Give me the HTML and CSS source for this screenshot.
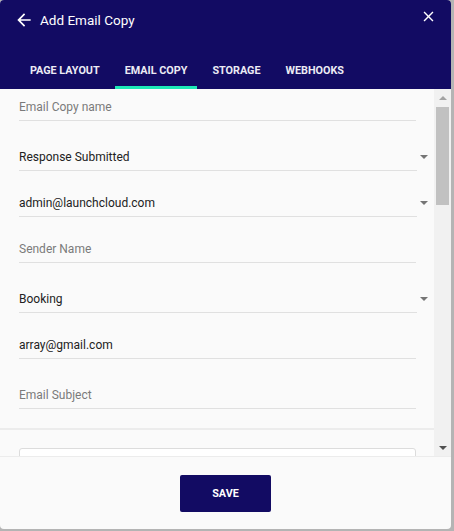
FILE: index.html
```html
<!DOCTYPE html>
<html>
<head>
<meta charset="utf-8">
<link rel="stylesheet" href="styles.css">
</head>
<body>
<div class="dialog">
  <div class="header">
    <div class="titlebar">
      <svg class="back" viewBox="0 0 24 24" width="20" height="20"><path fill="#fff" d="M20 11H7.830l5.590-5.590L12 4l-8 8 8 8 1.410-1.410L7.830 13H20v-2z"/></svg>
      <span class="title">Add Email Copy</span>
      <svg class="close" viewBox="0 0 24 24" width="17" height="17"><path fill="#fff" d="M19 6.41L17.59 5 12 10.59 6.41 5 5 6.41 10.59 12 5 17.59 6.41 19 12 13.41 17.59 19 19 17.59 13.41 12z"/></svg>
    </div>
    <div class="tabs">
      <div class="tab">PAGE LAYOUT</div>
      <div class="tab active">EMAIL COPY</div>
      <div class="tab">STORAGE</div>
      <div class="tab">WEBHOOKS</div>
    </div>
  </div>
  <div class="body">
    <div class="scroll-area">
      <div class="fields">
        <div class="field text"><div class="control placeholder">Email Copy name</div></div>
        <div class="field select"><div class="control">Response Submitted</div><span class="caret"></span></div>
        <div class="field select"><div class="control">admin@launchcloud.com</div><span class="caret"></span></div>
        <div class="field text"><div class="control placeholder">Sender Name</div></div>
        <div class="field select"><div class="control">Booking</div><span class="caret"></span></div>
        <div class="field text"><div class="control">array@gmail.com</div></div>
        <div class="field text last"><div class="control placeholder">Email Subject</div></div>
      </div>
      <div class="divider"></div>
      <div class="editor"></div>
    </div>
    <div class="scrollbar">
      <div class="sb-btn"><span class="sb-up"></span></div>
      <div class="sb-track"><div class="sb-thumb"></div></div>
      <div class="sb-btn"><span class="sb-down"></span></div>
    </div>
  </div>
  <div class="footer">
    <button class="save">SAVE</button>
  </div>
</div>
</body>
</html>
```
FILE: styles.css
```css
html, body {
  margin: 0;
  padding: 0;
}
body {
  background: #b4b4b4;
  font-family: Roboto, "Liberation Sans", sans-serif;
  width: 454px;
  height: 531px;
  overflow: hidden;
}
.dialog {
  width: 451px;
  height: 529px;
  border-radius: 4px;
  overflow: hidden;
  background: #fafafa;
  display: flex;
  flex-direction: column;
}
.header {
  background: #120b63;
  height: 89px;
  display: flex;
  flex-direction: column;
  flex-shrink: 0;
}
.titlebar {
  height: 40px;
  display: flex;
  align-items: center;
  padding-left: 14px;
}
.back {
  display: block;
  flex-shrink: 0;
}
.title {
  margin-left: 6px;
  color: #fff;
  font-size: 13.5px;
}
.close {
  display: block;
  align-self: flex-start;
  margin-top: 8px;
  margin-left: auto;
  margin-right: 14px;
}
.tabs {
  margin-top: auto;
  display: flex;
  padding-left: 20px;
  gap: 5px;
}
.tab {
  height: 31px;
  box-sizing: border-box;
  padding: 0 10px 4px;
  border-bottom: 3px solid transparent;
  display: flex;
  align-items: center;
  color: #ecebf4;
  font-size: 10.8px;
  font-weight: 700;
}
.tab.active {
  border-bottom-color: #1de9b6;
}
.body {
  height: 367px;
  display: flex;
  flex-shrink: 0;
}
.scroll-area {
  flex: 1;
  overflow: hidden;
}
.fields {
  padding: 3px 6px 0 19px;
}
.field {
  display: flex;
  align-items: center;
}
.field.text {
  margin-bottom: 21px;
  padding-right: 12px;
}
.field.select {
  margin-bottom: 17px;
}
.field.last {
  margin-bottom: 19px;
}
.control {
  flex: 1;
  height: 27px;
  padding-top: 1px;
  border-bottom: 1px solid #e0e0e0;
  display: flex;
  align-items: center;
  font-size: 12px;
  color: #222;
}
.control.placeholder {
  color: #7a7a7a;
}
.caret {
  width: 0;
  height: 0;
  border-left: 4.5px solid transparent;
  border-right: 4.5px solid transparent;
  border-top: 4.5px solid #757575;
  margin-left: 3px;
}
.divider {
  height: 2px;
  background: #ececec;
}
.editor {
  margin: 18px 18px 0 19px;
  height: 40px;
  background: #fff;
  border: 1px solid #dcdcdc;
  border-radius: 3px;
}
.scrollbar {
  width: 17px;
  background: #f1f1f1;
  display: flex;
  flex-direction: column;
}
.sb-btn {
  height: 17px;
  display: flex;
  align-items: center;
  justify-content: center;
}
.sb-up {
  width: 0;
  height: 0;
  border-left: 4px solid transparent;
  border-right: 4px solid transparent;
  border-bottom: 4px solid #a3a3a3;
}
.sb-down {
  width: 0;
  height: 0;
  border-left: 4px solid transparent;
  border-right: 4px solid transparent;
  border-top: 4px solid #505050;
}
.sb-track {
  flex: 1;
  padding: 1px 2px 0;
}
.sb-thumb {
  height: 98px;
  background: #c1c1c1;
}
.footer {
  flex: 1;
  border-top: 1px solid #ececec;
  display: flex;
  justify-content: center;
  align-items: flex-start;
  padding-top: 18px;
}
.save {
  width: 91px;
  height: 37px;
  border: none;
  border-radius: 2px;
  background: #120b63;
  color: #fff;
  font-family: Roboto, "Liberation Sans", sans-serif;
  font-size: 10.8px;
  font-weight: 700;
  padding: 0;
}
```
